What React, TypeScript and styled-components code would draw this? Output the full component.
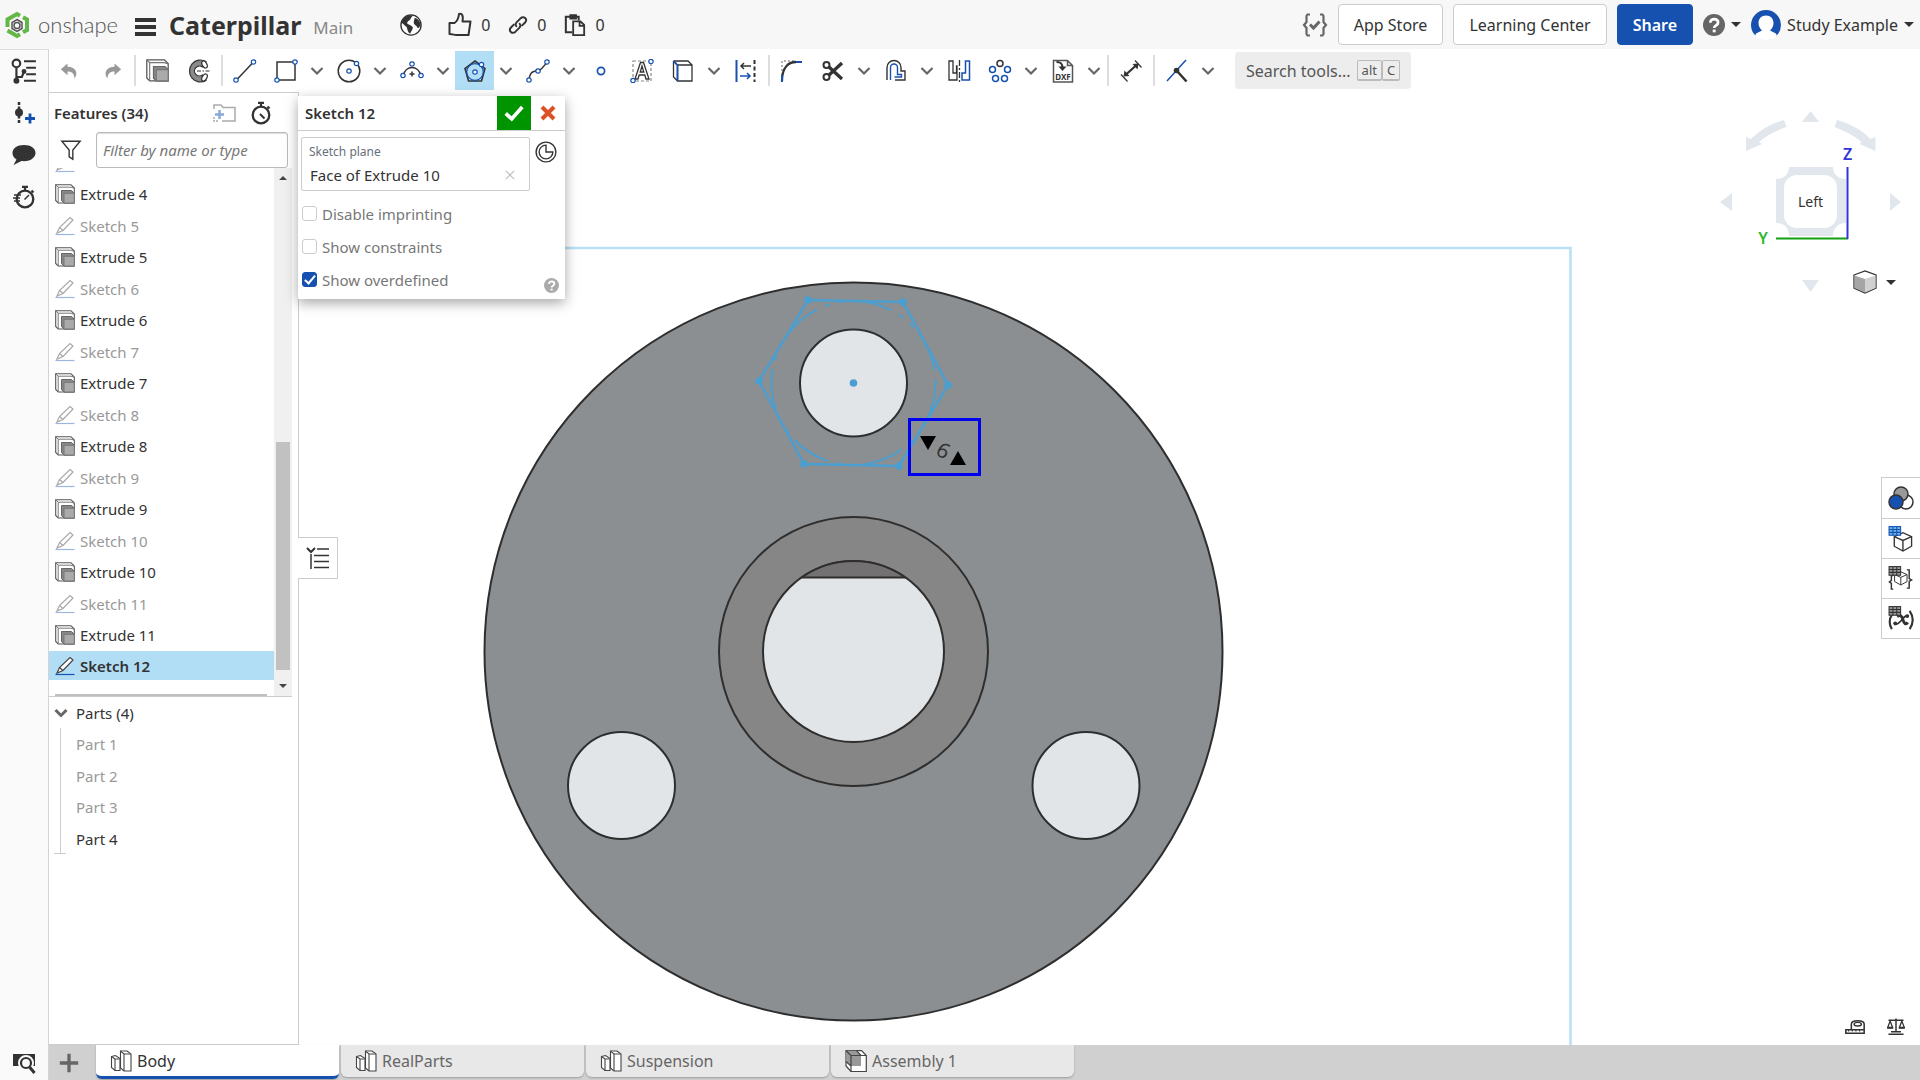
import React from 'react';
import styled, { createGlobalStyle, css } from 'styled-components';

const INK = '#333333';
const BLUE = '#1651b0';
const LINE = '#cccccc';

const Global = createGlobalStyle`
  *, *::before, *::after { box-sizing: border-box; }
  html, body, #root { height: 100%; }
  body {
    margin: 0;
    background: #ffffff;
    color: ${INK};
    font-family: "Noto Sans", "Open Sans", "Liberation Sans", sans-serif;
    font-size: 15px;
    line-height: 20px;
    overflow: hidden;
  }
  button, input { font: inherit; color: inherit; }
  button { background: none; border: 0; padding: 0; cursor: pointer; }
  a { color: inherit; text-decoration: none; }
  ul { list-style: none; margin: 0; padding: 0; }
  svg { display: block; flex: none; }
`;

/* ---------- shell ---------- */
const Shell = styled.div`
  display: flex;
  flex-direction: column;
  height: 100vh;
`;
const Body = styled.div`
  flex: 1;
  display: flex;
  min-height: 0;
`;
const Column = styled.div`
  flex: 1;
  display: flex;
  flex-direction: column;
  min-width: 0;
`;
const Work = styled.main`
  flex: 1;
  display: flex;
  min-height: 0;
`;

/* ---------- header ---------- */
const Header = styled.header`
  flex: none;
  display: flex;
  align-items: center;
  height: 49px;
  padding: 0 6px 0 5px;
  background: #f7f7f7;
  font-size: 16px;
`;
const Brand = styled.a`
  display: flex;
  align-items: center;
  gap: 9px;
  width: 130px;
  font: 300 22px/32px Lato, sans-serif;
  color: #555555;
`;
const MenuButton = styled.button`
  display: grid;
  gap: 3px;
  width: 21px;
  margin: 4px 13px 0 0;
`;
const MenuBar = styled.span`
  height: 4px;
  background: ${INK};
`;
const DocName = styled.h1`
  margin: 0 12px 0 0;
  font-size: 25px;
  line-height: 34px;
  font-weight: 700;
`;
const Branch = styled.span`
  padding-top: 6px;
  font-size: 17px;
  color: #888888;
`;
const Stats = styled.div`
  display: flex;
  align-items: center;
  gap: 18px;
  margin-left: 47px;
`;
const Stat = styled.button`
  display: flex;
  align-items: center;
  gap: 9px;
`;
const HeaderRight = styled.div`
  display: flex;
  align-items: center;
  gap: 10px;
  margin-left: auto;
`;
const HeaderButton = styled.button<{ $primary?: boolean }>`
  height: 41px;
  padding: 0 15px;
  border: 1px solid ${LINE};
  border-radius: 4px;
  background: #ffffff;
  ${(p) =>
    p.$primary &&
    css`
      border-color: ${BLUE};
      background: ${BLUE};
      color: #ffffff;
      font-weight: 600;
    `}
`;
const MenuTrigger = styled.button`
  display: flex;
  align-items: center;
  gap: 6px;
`;
const Caret = styled.span`
  border: 5px solid transparent;
  border-top-color: ${INK};
  border-bottom-width: 0;
`;

/* ---------- left rail ---------- */
const Rail = styled.nav`
  flex: none;
  display: flex;
  flex-direction: column;
  width: 49px;
  border-top: 1px solid #dddddd;
  border-right: 1px solid #d4d4d4;
  background: #fafafa;
`;
const RailButton = styled.button<{ $last?: boolean }>`
  display: grid;
  place-items: center;
  height: 42px;
  ${(p) => p.$last && 'margin-top: auto; height: 35px;'}
`;

/* ---------- toolbar ---------- */
const Toolbar = styled.div`
  flex: none;
  display: flex;
  align-items: center;
  height: 43px;
  background: #ffffff;
`;
const History = styled.div`
  display: flex;
  gap: 1px;
`;
const Tool = styled.button<{ $active?: boolean }>`
  display: grid;
  place-items: center;
  width: 39px;
  height: 39px;
  margin: 0 1px;
  background: ${(p) => (p.$active ? '#b1def5' : 'transparent')};
`;
const Drop = styled.button`
  display: grid;
  place-items: center;
  width: 22px;
  height: 39px;
`;
const Separator = styled.span`
  width: 2px;
  height: 31px;
  margin: 0 1px 0 2px;
  background: #dddddd;
`;
const SearchTools = styled.button`
  display: flex;
  align-items: center;
  height: 37px;
  margin-left: 16px;
  padding: 0 11px;
  border-radius: 4px;
  background: #ededed;
  font-size: 16px;
  color: #555555;
`;
const Key = styled.kbd`
  height: 21px;
  padding: 0 4px;
  border: 1px solid #bbbbbb;
  border-bottom-width: 2px;
  border-radius: 2px;
  font: 13px/18px "Noto Sans", sans-serif;
  &:first-of-type { margin-left: 6px; }
`;

/* ---------- feature panel ---------- */
const Panel = styled.aside`
  flex: none;
  display: flex;
  flex-direction: column;
  width: 250px;
  border: 1px solid ${LINE};
  border-left: 0;
  background: #ffffff;
`;
const PanelHeader = styled.div`
  display: flex;
  align-items: center;
  gap: 12px;
  height: 39px;
  padding: 0 26px 0 5px;
`;
const PanelTitle = styled.h2`
  flex: 1;
  margin: 0;
  font-size: 15px;
  font-weight: 600;
`;
const FilterRow = styled.label`
  display: flex;
  align-items: center;
  gap: 14px;
  padding: 0 10px 0 11px;
`;
const FilterInput = styled.input`
  flex: 1;
  min-width: 0;
  height: 36px;
  padding: 0 6px;
  border: 1px solid #bbbbbb;
  border-radius: 3px;
  background: #ffffff;
  box-shadow: inset 0 1px 1px #dddddd;
  &::placeholder { color: #777777; font-style: italic; opacity: 1; }
`;
const FeatureArea = styled.div`
  flex: 0 1 529px;
  display: flex;
  min-height: 0;
  margin-right: 6px;
  border-bottom: 1px solid ${LINE};
`;
const FeatureList = styled.ul`
  flex: 1;
  display: flex;
  flex-direction: column;
  justify-content: flex-end;
  overflow: hidden;
`;
const FeatureRow = styled.li<{ $muted?: boolean; $selected?: boolean }>`
  flex: none;
  display: flex;
  align-items: center;
  gap: 5px;
  height: ${(p) => (p.$muted ? 31 : 32)}px;
  padding-left: 6px;
  color: ${(p) => (p.$muted ? '#999999' : INK)};
  ${(p) =>
    p.$selected &&
    css`
      height: 29px;
      background: #b1def5;
      font-weight: 600;
    `}
`;
const RollbackBar = styled.li`
  flex: none;
  height: 2px;
  margin: 14px 7px 0 6px;
  background: #c0c0c0;
`;
const Scrollbar = styled.div`
  display: flex;
  flex-direction: column;
  justify-content: space-between;
  align-items: center;
  width: 18px;
  padding: 8px 0;
  background: #f0f0f0;
`;
const ScrollArrow = styled.span<{ $down?: boolean }>`
  border: 4px solid transparent;
  ${(p) =>
    p.$down
      ? 'border-top-color: #444444; border-bottom-width: 0;'
      : 'border-bottom-color: #444444; border-top-width: 0;'}
`;
const Thumb = styled.span`
  width: 14px;
  height: 228px;
  margin: auto 0 14px;
  background: #c1c1c1;
`;
const PartsHeader = styled.button`
  display: flex;
  align-items: center;
  gap: 8px;
  height: 31px;
  padding-left: 5px;
`;
const PartsTree = styled.ul`
  position: relative;
  margin-left: 11px;
  padding-left: 15px;
  border-left: 1px solid ${LINE};
  &::after {
    content: "";
    position: absolute;
    left: -7px;
    bottom: 0;
    width: 12px;
    height: 1px;
    background: ${LINE};
  }
`;
const Part = styled.li<{ $muted?: boolean }>`
  height: 32px;
  line-height: 32px;
  color: ${(p) => (p.$muted ? '#999999' : INK)};
  &:nth-child(even) { height: 31px; }
`;

/* ---------- graphics area ---------- */
const Stage = styled.section`
  position: relative;
  flex: 1;
  min-width: 0;
`;
const Drawing = styled.svg`
  width: 100%;
  height: 100%;
`;
const Dialog = styled.form`
  position: absolute;
  top: 4px;
  left: -1px;
  width: 267px;
  background: rgba(255, 255, 255, 0.98);
  box-shadow: 0 4px 12px rgba(0, 0, 0, 0.35);
  color: #777777;
`;
const DialogHeader = styled.div`
  display: flex;
  align-items: center;
  height: 35px;
  border-bottom: 1px solid ${LINE};
  color: ${INK};
`;
const DialogTitle = styled.h3`
  flex: 1;
  margin: 0;
  padding-left: 7px;
  font-size: 15px;
  font-weight: 600;
`;
const Accept = styled.button`
  display: grid;
  place-items: center;
  width: 34px;
  height: 34px;
  background: #009400;
`;
const Cancel = styled(Accept)`
  background: none;
`;
const PlaneRow = styled.div`
  display: flex;
  align-items: flex-start;
  gap: 5px;
  padding: 6px 8px 0 3px;
`;
const PlaneField = styled.div`
  flex: 1;
  padding: 4px 7px 2px;
  border: 1px solid ${LINE};
  border-radius: 2px;
`;
const FieldLabel = styled.div`
  font-size: 12px;
  line-height: 20px;
  color: #65707a;
`;
const FieldValue = styled.div`
  display: flex;
  align-items: center;
  justify-content: space-between;
  height: 26px;
  padding: 0 7px 0 1px;
  color: ${INK};
`;
const ClockSlot = styled.span`
  padding-top: 4px;
`;
const Options = styled.div`
  display: grid;
  padding: 6px 4px 3px;
`;
const Option = styled.label`
  display: flex;
  align-items: center;
  gap: 5px;
  height: 33px;
`;
const Check = styled.input`
  appearance: none;
  display: grid;
  justify-items: center;
  flex: none;
  width: 15px;
  height: 15px;
  margin: 0 0 1px;
  border: 1px solid ${LINE};
  border-radius: 3px;
  background: #ffffff;
  &:checked { border-color: ${BLUE}; background: ${BLUE}; }
  &:checked::after {
    content: "";
    width: 6px;
    height: 11px;
    border: solid #ffffff;
    border-width: 0 2px 2px 0;
    transform: rotate(40deg);
  }
`;
const HelpSlot = styled.span`
  position: absolute;
  right: 6px;
  bottom: 6px;
`;
const ListToggle = styled.button`
  position: absolute;
  left: -1px;
  top: 445px;
  display: grid;
  place-items: center;
  width: 40px;
  height: 42px;
  border: 1px solid ${LINE};
  border-left: 0;
  background: #ffffff;
`;
const ViewCube = styled.div`
  position: absolute;
  top: 0;
  right: 0;
`;
const ViewMenu = styled.button`
  position: absolute;
  top: 178px;
  right: 24px;
  display: flex;
  align-items: center;
  gap: 9px;
`;
const SideTabs = styled.div`
  position: absolute;
  top: 385px;
  right: 0;
  width: 39px;
  border: 1px solid ${LINE};
  border-right: 0;
  background: #ffffff;
`;
const SideTab = styled.button`
  display: grid;
  place-items: center;
  width: 38px;
  height: 40px;
  & + & { border-top: 1px solid ${LINE}; }
`;
const MeasureTools = styled.div`
  position: absolute;
  right: 14px;
  bottom: 8px;
  display: flex;
  gap: 20px;
`;

/* ---------- document tabs ---------- */
const TabBar = styled.nav`
  flex: none;
  display: flex;
  gap: 2px;
  height: 35px;
  background: #d0d0d0;
`;
const AddTab = styled.button`
  display: grid;
  place-items: center;
  width: 45px;
  height: 35px;
  padding-right: 6px;
`;
const Tab = styled.button<{ $active?: boolean }>`
  display: flex;
  align-items: center;
  gap: 5px;
  width: 243px;
  height: 32px;
  padding: 0 14px;
  border-radius: 0 0 6px 6px;
  background: #e8e8e8;
  box-shadow: 0 1px 2px rgba(0, 0, 0, 0.25);
  font-size: 16px;
  color: #666666;
  ${(p) =>
    p.$active &&
    css`
      height: 34px;
      border-bottom: 3px solid ${BLUE};
      background: #ffffff;
      color: ${INK};
    `}
`;

/* ---------- icons ---------- */
type IconProps = { w?: number; h?: number; box?: string; children: React.ReactNode };
const Icon = ({ w = 24, h = w, box = '0 0 24 24', children }: IconProps) => (
  <svg width={w} height={h} viewBox={box} fill="none" stroke={INK} strokeWidth="1.5" aria-hidden="true">
    {children}
  </svg>
);
const Node = ({ x, y, c = BLUE }: { x: number; y: number; c?: string }) => (
  <circle cx={x} cy={y} r="2.2" fill="#ffffff" stroke={c} strokeWidth="1.2" />
);
const Chevron = ({ heavy }: { heavy?: boolean }) => (
  <Icon w={14} h={10} box="0 0 14 10">
    <path d="M1.5 2l5.5 5.5L12.5 2" stroke="#666" strokeWidth={heavy ? 3 : 2.2} />
  </Icon>
);
const ExtrudeIcon = ({ size = 20 }: { size?: number }) => (
  <Icon w={size} box="0 0 20 20">
    <path d="M.7.7H16l3.300 3.300v15H3.200L.7 16.500z" fill="#fff" stroke="#555" strokeWidth="1.100" />
    <path d="M.7.7l2.500 2.500H16l3.300 1M3.200 3.200V19" stroke="#777" strokeWidth="1" />
    <path d="M6.500 6.500h10l2.800 2.800V19H9l-2.500-2.300z" fill="#888" stroke="#666" strokeWidth="1" />
    <path d="M9 9.300h10.300V19H9z" fill="#aaa" stroke="#777" strokeWidth="1" />
  </Icon>
);
const PencilIcon = ({ muted }: { muted?: boolean }) => (
  <Icon w={20} box="0 0 20 20">
    <g stroke={muted ? '#a8a8a8' : '#444'} strokeWidth="1.2">
      <path d="M2 17L4.500 11.500 15 1.500l3 2.500L8 14.500z" fill="#fff" />
      <path d="M4.500 11.500l3.500 3" />
    </g>
    <path d="M0.500 18.500h19" stroke={muted ? '#9db6e0' : BLUE} strokeWidth="1.2" />
  </Icon>
);
const StudioIcon = () => (
  <Icon w={22} box="0 0 22 22">
    <g strokeWidth="1.1" stroke="#444" fill="#fff">
      <path d="M1.500 6.500l4-1 4.500 3v12h-5l-3.500-3z" />
      <path d="M1.500 6.500l3.500 2.500h4.500M5 9v11.500" />
      <path d="M10.500 1h6.500l4 3v17h-7l-3.500-3z" />
      <path d="M10.500 1l3.500 3h7M14 4V21" />
    </g>
  </Icon>
);
const AssemblyIcon = () => (
  <Icon w={22} box="0 0 22 22">
    <g strokeWidth="1.2" stroke="#444">
      <path d="M1 .700h15.500L21.300 5.500v16H6L1 16z" fill="#fff" />
      <path d="M1 .700h10.500l4.500 4.800v10.500H6L1 11.500z" fill="#999" stroke="none" />
      <path d="M1 .700l5 4.800h15.300M6 5.500v16M1 11.500L6 16M11.500.700L16 5.500M16.500.700" />
    </g>
  </Icon>
);
const CubeWire = () => (
  <g strokeWidth="1.4">
    <path d="M6 11l9-4 9 4v10l-9 5-9-5z" fill="#fff" />
    <path d="M6 11l9 4 9-4M15 15v11" />
  </g>
);
const Grid9 = ({ c, f }: { c: string; f: string }) => (
  <g stroke={c} strokeWidth="1.1" fill={f}>
    <rect x="0.600" y="0.600" width="12" height="9" />
    <path d="M4.600 0.600v9M8.600 0.600v9M0.600 3.600h12M0.600 6.600h12" />
  </g>
);
const QuestionIcon = ({ size, c }: { size: number; c: string }) => (
  <Icon w={size}>
    <circle cx="12" cy="12" r="12" fill={c} stroke="none" />
    <path d="M8 9.500c0-5.500 8.500-5 8.500-.3 0 3.300-4.300 3-4.300 6" stroke="#fff" strokeWidth="3" />
    <rect x="10.600" y="17" width="3.200" height="3" fill="#fff" stroke="none" />
  </Icon>
);
const Stopwatch = ({ fast }: { fast?: boolean }) => (
  <Icon w={24}>
    <circle cx="13" cy="14" r="8.300" strokeWidth="2.300" />
    <path d="M10 1.800h6M13 2v4M19.500 5.500l2 2" strokeWidth="2.200" />
    {fast ? <path d="M12.500 14.500L17 10M2 10h7M1 13h7M2 16h6" /> : <path d="M12 13l4.500 4.500" strokeWidth="2" />}
  </Icon>
);

/* ---------- toolbar data ---------- */
type ToolDef = { name: string; icon?: React.ReactNode; drop?: boolean; active?: boolean; sep?: boolean };
const tools: ToolDef[] = [
  { name: 'sep1', sep: true },
  { name: 'Extrude', icon: <ExtrudeIcon size={23} /> },
  {
    name: 'Revolve',
    icon: (
      <Icon>
        <path d="M19 2.500A11 11 0 1 0 19 21.500l-3.500-5.500a5 5 0 1 1 0-8z" fill="#8a8a8a" strokeWidth="1.200" />
        <ellipse cx="17.500" cy="5.500" rx="2.300" ry="3.800" transform="rotate(-30 17.500 5.500)" fill="#fff" strokeWidth="1.200" />
        <ellipse cx="17.500" cy="18.500" rx="2.300" ry="3.800" transform="rotate(30 17.500 18.500)" fill="#fff" strokeWidth="1.200" />
        <path d="M10 12h14" strokeDasharray="4 1.500 1.500 1.500" strokeWidth="1.200" />
      </Icon>
    ),
  },
  { name: 'sep2', sep: true },
  { name: 'Line', icon: <Icon><path d="M4 20.500L20 3.500" /><Node x={3} y={21} /><Node x={20.500} y={3} /></Icon> },
  { name: 'Corner rectangle', drop: true, icon: <Icon><rect x="3" y="3" width="18" height="18" /><Node x={3} y={21} /><Node x={21} y={3} /></Icon> },
  { name: 'Center point circle', drop: true, icon: <Icon><circle cx="12" cy="12" r="10.800" /><Node x={12} y={12} /><Node x={19.500} y={4.500} /></Icon> },
  { name: '3 point arc', drop: true, icon: <Icon><path d="M3.500 16a8.800 10 0 0 1 17 0" /><path d="M12 12.500v5M9.500 15h5" /><Node x={3} y={16.500} /><Node x={12} y={5} /><Node x={21} y={16.500} /></Icon> },
  { name: 'Inscribed polygon', drop: true, active: true, icon: <Icon><path d="M12 2l10 7.500L18.500 22h-13L2 9.500z" strokeWidth="1.600" /><circle cx="12" cy="13" r="8.300" stroke={BLUE} strokeWidth="1.200" /><Node x={12} y={13} /><Node x={18.500} y={5.500} /></Icon> },
  { name: 'Spline', drop: true, icon: <Icon><path d="M3 20.500C4.500 10 10 13 13 11.500S18 7 20.500 4" /><Node x={3} y={21} /><Node x={12} y={12} /><Node x={21} y={3} /></Icon> },
  { name: 'Point', icon: <Icon><circle cx="12" cy="12" r="3.600" stroke={BLUE} strokeWidth="1.700" /></Icon> },
  {
    name: 'Text',
    icon: (
      <Icon>
        <rect x="3" y="2" width="18" height="20" stroke="#888" strokeDasharray="3 2" strokeWidth="1.200" />
        <path d="M5 20L10.500 3.500h3L19 20h-3l-1.200-4H9.200L8 20zM10.200 13h3.600L12 7z" fill="#fff" strokeWidth="1.300" />
        <Node x={3} y={21.500} /><Node x={21} y={2.500} />
      </Icon>
    ),
  },
  { name: 'Use', drop: true, icon: <Icon><path d="M6.500 6H21v16H6.500zM2.500 2H17l4 4M2.500 2v16l4 4" strokeWidth="1.300" /><path d="M2.500 2l4 4v16" stroke={BLUE} strokeWidth="1.800" /></Icon> },
  { name: 'Construction', icon: <Icon><path d="M2.500 1v22" stroke={BLUE} strokeWidth="2" /><path d="M20.500 1v22" strokeDasharray="4 2.500" strokeWidth="2" /><path d="M17 7H7m3-3L7 7l3 3" /><path d="M6 17h10m-3-3l3 3-3 3" stroke={BLUE} /></Icon> },
  { name: 'sep3', sep: true },
  { name: 'Sketch fillet', icon: <Icon><path d="M2 16V2h13" stroke="#999" strokeDasharray="2 2" /><path d="M2 22C2 9 8 3 16 3" strokeWidth="2.300" /><path d="M16 3h6M2 16v7" stroke={BLUE} strokeWidth="2" /></Icon> },
  { name: 'Trim', drop: true, icon: <Icon><circle cx="5.500" cy="6" r="3" strokeWidth="2" /><circle cx="5.500" cy="18" r="3" strokeWidth="2" /><path d="M8 8l13 12M8 16L21 4" strokeWidth="3.300" /></Icon> },
  { name: 'Offset', drop: true, icon: <Icon><path d="M3 21V8.500a7 7 0 0 1 14 0V12h4v9H11" strokeWidth="1.400" /><path d="M6.500 21V8.500a3.500 3.500 0 0 1 7 0v7h4v2.500h-7" stroke={BLUE} strokeWidth="1.400" /></Icon> },
  { name: 'Mirror', icon: <Icon><path d="M2 2h4v12h3.500V7H10v14H2z" strokeWidth="1.300" /><path d="M12.500 1v22" strokeDasharray="6 2 2 2" strokeWidth="1.300" /><path d="M22.500 2h-4v12H15v7h7.500z" stroke={BLUE} /></Icon> },
  { name: 'Pattern', drop: true, icon: <Icon><circle cx="12" cy="4.500" r="3" /><g stroke={BLUE}><circle cx="4.500" cy="10.500" r="3" /><circle cx="19.500" cy="10.500" r="3" /><circle cx="7.500" cy="19.500" r="3" /><circle cx="16.500" cy="19.500" r="3" /></g></Icon> },
  {
    name: 'Insert DXF',
    drop: true,
    icon: (
      <Icon>
        <path d="M2.500 1.500h14l5 5V23h-19zM16.500 1.500v5h5" stroke="#555" />
        <path d="M5.500 3c5 0 6 2 6 6" strokeWidth="2.200" /><path d="M7.500 7.500h8l-4 4.500z" fill={INK} stroke="none" />
        <text x="12" y="20.500" textAnchor="middle" fontSize="8" fontWeight="700" fill={INK} stroke="none">DXF</text>
      </Icon>
    ),
  },
  { name: 'sep4', sep: true },
  { name: 'Dimension', icon: <Icon><path d="M7 15.500L17 6.500" strokeWidth="2.300" /><path d="M4.500 17.500l1-6 5 5.500zM19.500 4.500l-1 6-5-5.500z" fill={INK} stroke="none" /><path d="M2 15.500l6.500 7M16 1.500l6.500 7" strokeWidth="1.200" /></Icon> },
  { name: 'sep5', sep: true },
  { name: 'Constraint', drop: true, icon: <Icon><path d="M2 22L21 1" stroke={BLUE} /><path d="M12 12l9.500 10.500" strokeWidth="2.600" /><circle cx="11.500" cy="11.500" r="2.800" fill={INK} stroke="none" /></Icon> },
];

const features = ['Extrude 4', 'Sketch 5', 'Extrude 5', 'Sketch 6', 'Extrude 6', 'Sketch 7', 'Extrude 7', 'Sketch 8', 'Extrude 8', 'Sketch 9', 'Extrude 9', 'Sketch 10', 'Extrude 10', 'Sketch 11', 'Extrude 11'];

/* ---------- sections ---------- */
const TopBar = () => (
  <Header>
    <Brand href="#" aria-label="onshape home">
      <Icon w={24} h={28} box="0 0 24 28">
        <g stroke="#62b846" strokeWidth="4">
          <path d="M2.500 16V8.500L12 3l3 1.700" />
          <path d="M18 6.300l4 2.200V19l-4 2.300" />
          <path d="M15 23.300L12 25l-9.500-5.500" />
        </g>
        <path d="M12 8.500l5 3v6l-5 3-5-3v-6z" stroke="#555" />
        <circle cx="12" cy="14.500" r="3" stroke="#555" />
      </Icon>
      onshape
    </Brand>
    <MenuButton aria-label="Document menu"><MenuBar /><MenuBar /><MenuBar /></MenuButton>
    <DocName>Caterpillar</DocName>
    <Branch>Main</Branch>
    <Stats>
      <Stat aria-label="Public document">
        <Icon w={22}>
          <circle cx="12" cy="12" r="11" fill="#fff" />
          <path d="M4 5c4-4 8-3.500 10-3.500-1 2-2 2-2.500 4-1 2-4 2-3.500 5 2 1 5 2 6 4 0 3-2 4-3 7-2-1-3-4-3.500-7-2-2-5-4-6-5.500 0-1 1-3 2.500-4zM16 4c4 1 6 4 6.500 8-1 2-2 4-3.500 3-1-3-4-3-4-6 0-2 1-3 1-5z" fill={INK} stroke="none" />
        </Icon>
      </Stat>
      <Stat aria-label="Likes">
        <Icon w={32} h={26} box="-8 0 32 26">
          <path d="M1.500 11h5c3-2 4-4 4.500-9 3-1 4.500 1 3.500 7.500h8L20.500 23H8c-2 0-3-1-6.500-1z" strokeWidth="2" strokeLinejoin="round" />
        </Icon>
        0
      </Stat>
      <Stat aria-label="Links">
        <Icon w={20}>
          <g strokeWidth="2.300" strokeLinecap="round">
            <path d="M10 13.500c-1.500-2-1-3.500.5-5L15 4c4-3.500 9 1 5.500 5L17 12.500" />
            <path d="M14 10.500c1.500 2 1 3.500-.5 5L9 20c-4 3.500-9-1-5.500-5L7 11.500" />
          </g>
        </Icon>
        0
      </Stat>
      <Stat aria-label="Copies">
        <Icon w={22}>
          <path d="M7 3H2v17h7M7 3h9v4M7 1.500h6v3.500H7z" strokeWidth="2.200" />
          <path d="M10 8h8l4 4v11H10zM17 8v5h5" strokeWidth="2" />
        </Icon>
        0
      </Stat>
    </Stats>
    <HeaderRight>
      <Stat aria-label="FeatureScript">
        <Icon w={26} h={24} box="0 0 26 24">
          <path d="M8 1.500H5.500L4.500 3v6L2 12l2.500 3v6l1 1.500H8M18 1.500h2.500l1 1.500v6l2.500 3-2.500 3v6l-1 1.500H18" stroke="#666" strokeWidth="2.200" />
          <path d="M8 11.500l3.500 3.500 6-6.500" stroke="#666" strokeWidth="3" />
        </Icon>
      </Stat>
      <HeaderButton>App Store</HeaderButton>
      <HeaderButton>Learning Center</HeaderButton>
      <HeaderButton $primary>Share</HeaderButton>
      <MenuTrigger aria-label="Help"><QuestionIcon size={22} c="#666666" /><Caret /></MenuTrigger>
      <MenuTrigger>
        <Icon w={30} box="0 0 30 30">
          <circle cx="15" cy="15" r="15" fill={BLUE} stroke="none" />
          <path d="M15 5.500c4.500 0 7.500 3 7.500 7.500 0 3-1.500 6-3.500 7.500l5 2.500c3 1.500 3 7-9 7s-12-5.500-9-7l5-2.500C9 19 7.500 16 7.500 13c0-4.500 3-7.500 7.500-7.500z" fill="#fff" stroke="none" />
        </Icon>
        Study Example
        <Caret />
      </MenuTrigger>
    </HeaderRight>
  </Header>
);

const SideRail = () => (
  <Rail aria-label="Panels">
    <RailButton aria-label="Feature list">
      <Icon w={26}>
        <circle cx="5" cy="5" r="3.500" strokeWidth="2" />
        <path d="M5 8.500V22M5 17.500h5l2-5M12 3h11M14 9h9M14 15h9M12 21h11" strokeWidth="2" />
        <circle cx="5" cy="21" r="2" fill={INK} /><circle cx="12" cy="12.500" r="1.500" fill={INK} />
      </Icon>
    </RailButton>
    <RailButton aria-label="Insert">
      <Icon w={24}>
        <path d="M7 1v22" strokeWidth="2.500" strokeDasharray="3 1.500" />
        <circle cx="7" cy="11.500" r="4" fill={INK} stroke="none" />
        <path d="M18 12.500v10M13 17.500h10" stroke={BLUE} strokeWidth="2.800" />
      </Icon>
    </RailButton>
    <RailButton aria-label="Comments">
      <Icon w={24}>
        <path d="M12 2C5 2 .500 5.500.500 10c0 3 1.500 5 4 6.500L1.500 22l8-4c9 1 14-3.500 14-8S19 2 12 2z" fill={INK} stroke="none" />
      </Icon>
    </RailButton>
    <RailButton aria-label="Performance"><Stopwatch fast /></RailButton>
    <RailButton aria-label="Search tabs" $last>
      <Icon w={24}>
        <path d="M1 3h22v12H1z" fill={INK} stroke="none" />
        <circle cx="14" cy="12" r="6.500" fill="#fafafa" stroke="#fafafa" strokeWidth="3" />
        <circle cx="14" cy="12" r="5" strokeWidth="2.200" /><path d="M17.500 16l5 6" strokeWidth="3" />
      </Icon>
    </RailButton>
  </Rail>
);

const SketchToolbar = () => (
  <Toolbar role="toolbar">
    <History>
      <Tool aria-label="Undo"><Icon w={20}><path d="M9 3L1 10l8 7v-4.500c6 0 8 3 8.500 8.500 5-7 1-14-8.500-14z" fill="#999" stroke="none" /></Icon></Tool>
      <Tool aria-label="Redo"><Icon w={20}><path d="M15 3l8 7-8 7v-4.500c-6 0-8 3-8.500 8.500-5-7-1-14 8.500-14z" fill="#999" stroke="none" /></Icon></Tool>
    </History>
    {tools.map((t) =>
      t.sep ? (
        <Separator key={t.name} />
      ) : (
        <React.Fragment key={t.name}>
          <Tool aria-label={t.name} $active={t.active}>{t.icon}</Tool>
          {t.drop && <Drop aria-label={`${t.name} options`}><Chevron /></Drop>}
        </React.Fragment>
      ),
    )}
    <SearchTools>Search tools...<Key>alt</Key><Key>C</Key></SearchTools>
  </Toolbar>
);

const FeaturePanel = () => (
  <Panel>
    <PanelHeader>
      <PanelTitle>Features (34)</PanelTitle>
      <Icon w={23} h={20} box="0 0 23 20">
        <path d="M1 6V2h7l2 2.500h12V18H9" stroke="#aaa" /><path d="M1 14v4h5" stroke="#aaa" strokeDasharray="2 1" />
        <path d="M6.500 7v9M2 11.500h9" stroke="#8aa8d8" strokeWidth="2.500" />
      </Icon>
      <Stopwatch />
    </PanelHeader>
    <FilterRow>
      <Icon w={22}><path d="M2 2.500h20l-8 9.500v10l-4-2.500V12z" /></Icon>
      <FilterInput placeholder="Filter by name or type" aria-label="Filter by name or type" />
    </FilterRow>
    <FeatureArea>
      <FeatureList>
        <FeatureRow $muted aria-label="Sketch 4"><PencilIcon muted /></FeatureRow>
        {features.map((f) => {
          const sketch = f.startsWith('Sketch');
          return (
            <FeatureRow key={f} $muted={sketch}>
              {sketch ? <PencilIcon muted /> : <ExtrudeIcon />}
              {f}
            </FeatureRow>
          );
        })}
        <FeatureRow $selected><PencilIcon />Sketch 12</FeatureRow>
        <RollbackBar />
      </FeatureList>
      <Scrollbar aria-hidden="true"><ScrollArrow /><Thumb /><ScrollArrow $down /></Scrollbar>
    </FeatureArea>
    <PartsHeader><Chevron heavy />Parts (4)</PartsHeader>
    <PartsTree>
      <Part $muted>Part 1</Part>
      <Part $muted>Part 2</Part>
      <Part $muted>Part 3</Part>
      <Part>Part 4</Part>
    </PartsTree>
  </Panel>
);

const hex: [number, number][] = [[808, 300], [903, 302], [948, 385], [899, 466], [804, 464], [759, 381]];

const Model = () => (
  <Drawing viewBox="299 92 1621 953" preserveAspectRatio="xMinYMin meet" aria-label="Part geometry">
    <path d="M299 248H1570.500V1045" fill="none" stroke="#b9dff3" strokeWidth="2.500" />
    <g stroke="#2e2e2e" strokeWidth="2">
      <circle cx="853.500" cy="651.500" r="369" fill="#8b8f92" />
      <circle cx="853.500" cy="651.500" r="134.500" fill="#868686" />
      <circle cx="853.500" cy="651.500" r="90.500" fill="#e1e5e8" />
      <path d="M801.500 577.500a90.500 90.500 0 0 1 104 0z" fill="#747172" />
      <circle cx="853.500" cy="383" r="53.500" fill="#e1e5e8" />
      <circle cx="621.500" cy="785.500" r="53.500" fill="#e1e5e8" />
      <circle cx="1086" cy="785.500" r="53.500" fill="#e1e5e8" />
    </g>
    <g fill="none" stroke="#4b9fd0" strokeWidth="2.500">
      <polygon points={hex.map((p) => p.join(',')).join(' ')} />
      <circle cx="853.500" cy="383" r="82" strokeWidth="2" strokeDasharray="40 9 5 9 5 9" />
    </g>
    <g fill="#4b9fd0">
      {hex.map(([x, y]) => <circle key={x} cx={x} cy={y} r="3.800" />)}
      <circle cx="853.500" cy="383" r="3.800" />
    </g>
    <rect x="909.500" y="419.500" width="70" height="55" fill="none" stroke="#0000f0" strokeWidth="3" />
    <path d="M920 436h16l-8 14zM950 465h16l-8-14z" fill="#000" />
    <text x="943" y="458" textAnchor="middle" fontSize="21" fill="#333" transform="rotate(28 943 451)">6</text>
  </Drawing>
);

const SketchDialog = () => (
  <Dialog onSubmit={(e) => e.preventDefault()}>
    <DialogHeader>
      <DialogTitle>Sketch 12</DialogTitle>
      <Accept aria-label="Accept"><Icon w={22}><path d="M3 12.500l6.500 6L21 5.500" stroke="#fff" strokeWidth="4" /></Icon></Accept>
      <Cancel type="button" aria-label="Cancel"><Icon w={16}><path d="M3 3l18 18M21 3L3 21" stroke="#dd5026" strokeWidth="6" /></Icon></Cancel>
    </DialogHeader>
    <PlaneRow>
      <PlaneField>
        <FieldLabel>Sketch plane</FieldLabel>
        <FieldValue>
          Face of Extrude 10
          <Icon w={10}><path d="M2 2l20 20M22 2L2 22" stroke="#bbb" strokeWidth="2.500" /></Icon>
        </FieldValue>
      </PlaneField>
      <ClockSlot>
        <Icon w={22}><circle cx="12" cy="12" r="10.800" /><path d="M12 4.500a7.500 7.500 0 1 0 7.500 7.500H12z" /></Icon>
      </ClockSlot>
    </PlaneRow>
    <Options>
      <Option><Check type="checkbox" />Disable imprinting</Option>
      <Option><Check type="checkbox" />Show constraints</Option>
      <Option><Check type="checkbox" defaultChecked />Show overdefined</Option>
    </Options>
    <HelpSlot><QuestionIcon size={15} c="#aaaaaa" /></HelpSlot>
  </Dialog>
);

const Navigation = () => (
  <>
    <ViewCube>
      <svg width="220" height="218" viewBox="0 2 220 218" aria-label="View cube">
        <g fill="#e1e7ed">
          <path d="M102 32h17l-8.500-11z" />
          <path d="M102 190h17l-8.500 12zM32 103v18l-12-9zM190 103v18l11-9z" />
          <path d="M89 77h44c0 6 4 12 13 12v44c-9 0-13 6-13 13H89c0-7-4-13-13-13V89c9 0 13-6 13-12z" />
          <path d="M84 30l2.500 7C75 41 66 46 59 52l3 2-16 7V47l5 2c9-9 19-15 33-19zM137 30l-2.500 7c11 4 20 9 27 15l-2 2 16 7V47l-5 2c-9-9-19-15-33.500-19z" />
        </g>
        <rect x="84" y="85" width="53" height="53" rx="13" fill="#fff" />
        <path d="M76 148.500h72" stroke="#12a012" strokeWidth="2" />
        <path d="M147.500 77v72" stroke="#3434d8" strokeWidth="2" />
        <text x="110.500" y="117" textAnchor="middle" fontSize="14" fill="#333">Left</text>
        <text x="147.500" y="70" textAnchor="middle" fontSize="16" fontWeight="600" fill="#3434d8">Z</text>
        <text x="63" y="154" textAnchor="middle" fontSize="16" fontWeight="600" fill="#2db82d">Y</text>
      </svg>
    </ViewCube>
    <ViewMenu aria-label="View options">
      <Icon w={24}>
        <path d="M1 5l11-4 11 4v13l-11 5-11-5z" fill="#fff" strokeWidth="1.300" />
        <path d="M1.500 5.500L12 9v13.500L1.500 18z" fill="#a5a5a5" stroke="none" />
        <path d="M22.500 5.500L12 9v13.500L22.500 18z" fill="#d0d0d0" stroke="none" />
      </Icon>
      <Caret />
    </ViewMenu>
    <SideTabs>
      <SideTab aria-label="Appearance">
        <Icon w={26} box="0 0 26 26">
          <circle cx="18" cy="17" r="7" fill="#fff" /><circle cx="13" cy="9" r="7" fill="#999" /><circle cx="8" cy="17" r="7" fill={BLUE} />
        </Icon>
      </SideTab>
      <SideTab aria-label="Configurations"><Icon w={26} box="0 0 26 27"><CubeWire /><Grid9 c={BLUE} f="#6cb4ee" /></Icon></SideTab>
      <SideTab aria-label="Custom tables">
        <Icon w={26} box="0 0 26 27">
          <g transform="translate(2 1) scale(.72)"><CubeWire /></g>
          <path d="M5 10H3v5l-2 1.500L3 18v6h2M19 4h2.500v9L24 14.500 21.500 16v7H19" />
          <Grid9 c={INK} f="#999" />
        </Icon>
      </SideTab>
      <SideTab aria-label="Variables">
        <Icon w={26} box="0 0 26 27">
          <path d="M3.500 9c-3 5-3 10 0 15M22 5c4 6 4 13 0 19" strokeWidth="2.200" />
          <path d="M9 11c3-2 5-1 6 3s3 6 5 3" strokeWidth="3" /><path d="M20 10c-5-1-7 10-14 9" strokeWidth="1.800" />
          <circle cx="19.500" cy="10.500" r="2" fill={INK} stroke="none" /><circle cx="7" cy="18" r="2" fill={INK} stroke="none" />
          <Grid9 c={INK} f="#999" />
        </Icon>
      </SideTab>
    </SideTabs>
    <MeasureTools>
      <Stat aria-label="Measure">
        <Icon w={22}>
          <path d="M8 16v-6c0-5 14-5 14 0v6H2v4h20v-4" strokeWidth="1.700" />
          <ellipse cx="15" cy="10" rx="4" ry="2" /><path d="M5 16v2M9 16v2M13 16v2M17 16v2" strokeWidth="1.200" />
        </Icon>
      </Stat>
      <Stat aria-label="Mass properties">
        <Icon w={20}>
          <path d="M12 3v16M3 5h18M3 22h18M6 19h12" strokeWidth="1.800" /><path d="M5 6L2 14h6zM19 6l-3 8h6z" /><path d="M1.500 14h7M15.500 14h7" strokeWidth="2.500" />
        </Icon>
      </Stat>
    </MeasureTools>
  </>
);

export default function App() {
  return (
    <Shell>
      <Global />
      <TopBar />
      <Body>
        <SideRail />
        <Column>
          <SketchToolbar />
          <Work>
            <FeaturePanel />
            <Stage>
              <Model />
              <ListToggle aria-label="Toggle feature list">
                <Icon w={24}>
                  <path d="M1 2l4 4 4-4" strokeWidth="2" />
                  <path d="M5 8v15M11 3h12M8 9.500h15M8 15.500h15M8 21.500h15" />
                </Icon>
              </ListToggle>
              <SketchDialog />
              <Navigation />
            </Stage>
          </Work>
          <TabBar>
            <AddTab aria-label="Add tab"><Icon w={20}><path d="M12 1v22M1 12h22" stroke="#666" strokeWidth="4" /></Icon></AddTab>
            <Tab $active><StudioIcon />Body</Tab>
            <Tab><StudioIcon />RealParts</Tab>
            <Tab><StudioIcon />Suspension</Tab>
            <Tab><AssemblyIcon />Assembly 1</Tab>
          </TabBar>
        </Column>
      </Body>
    </Shell>
  );
}
